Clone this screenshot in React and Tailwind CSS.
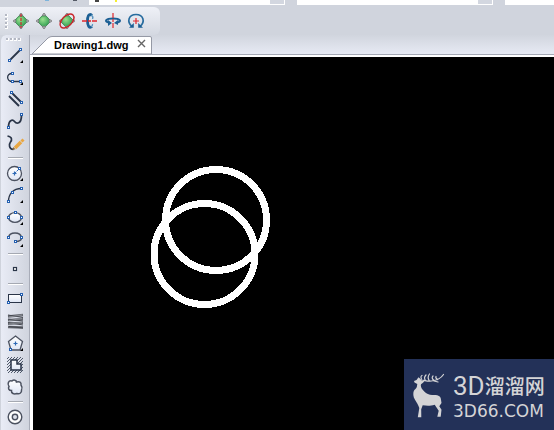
const DARK = '#2a3548'

// Small blue grip square at the end of a stroke
function Node({ x, y }) {
  return <rect x={x - 1.5} y={y - 1.5} width="2" height="2" fill="#fff" stroke="#2560b0" strokeWidth="1" />
}

function Plus({ x, y }) {
  return <path d={`M${x - 2} ${y}h4M${x} ${y - 2}v4`} stroke="#2f6ab5" strokeWidth="1.2" />
}

const groups = [
  [
    { name: 'Line', more: true, art: <><path d="M5 17 17 5" strokeWidth="1.8" /><Node x={6} y={17} /><Node x={17} y={6} /></> },
    { name: 'Polyline', more: true, art: <><path d="M8.500 7.500C2 7 2 15.500 8.500 15.500h8" strokeWidth="1.3" /><Node x={9} y={8} /><Node x={9} y={16} /><Node x={17} y={16} /></> },
    { name: 'Multiline', art: <><path d="M8 5l10 10M5 8l10 10" strokeWidth="1.9" /><Node x={8} y={5} /><Node x={18} y={15} /></> },
    { name: 'Spline', art: <><path d="M4.500 17c0-7 4-8 6-5.500s7 3 7-6.500" strokeWidth="1.8" /><Node x={5} y={18} /><Node x={18} y={5} /></> },
    { name: 'Freehand', art: <><path d="M3.500 4c5 1 4.500 4 3 6s-2 7 3 7.500" strokeWidth="1.700" /><path d="M11 16l6-6" stroke="#e9a743" strokeWidth="3.500" /><path d="M8.500 18l.8-3 2.200 2.200z" fill="#8a6a3c" stroke="none" /><path d="M17.500 9.500l2-2" stroke="#e9a743" strokeWidth="3" /></> },
  ],
  [
    { name: 'Circle', more: true, art: <><circle cx="10.5" cy="11.5" r="7" fill="url(#paper)" stroke="#4c5260" strokeWidth="1.3" /><path d="M10.500 11.500l5-5" stroke="#2f6ab5" strokeDasharray="2 1" /><Plus x={10.5} y={11.5} /><Node x={16} y={7} /></> },
    { name: 'Arc', more: true, art: <><path d="M4.500 17.500C4.500 10 9 4.500 17.500 4.500" strokeWidth="1.300" /><Node x={5} y={18} /><Node x={9} y={9} /><Node x={18} y={5} /></> },
    { name: 'Ellipse', more: true, art: <><ellipse cx="11" cy="11.5" rx="6.5" ry="4.800" fill="url(#paper)" stroke="#4c5260" strokeWidth="1.3" /><Node x={5} y={12} /><Node x={18} y={12} /><Node x={12} y={7} /></> },
    { name: 'Elliptical arc', more: true, art: <><path d="M4.500 9.500c1-6 12-6 13 0 0 3-2 4-6 4" stroke="#4c5260" strokeWidth="1.400" /><Node x={5} y={10} /><Node x={18} y={10} /><Node x={12} y={14} /></> },
  ],
  [{ name: 'Point', art: <rect x="9.5" y="9.5" width="3" height="3" fill="#fff" strokeWidth="1.2" /> }],
  [
    { name: 'Rectangle', art: <><rect x="4.500" y="6.500" width="13" height="8" fill="url(#paper)" /><Node x={5} y={15} /><Node x={18} y={7} /></> },
    {
      name: 'Helix',
      art: (
        <g stroke="#63666e" strokeWidth="2.600">
          <path d="M4 6.500l15-1.500M4 10.200l15-1.200M4 13.800l15-1M4 17l15 .5" />
          <path d="M4 5l15 2.500M4 9l15 2M4 12.500l15 2.500M5 16.500l14 1.500" stroke="#44474f" strokeWidth="1" />
          <path d="M5 7l13-2M5 10.500l13-2M5 14l13-1.500" stroke="#a9acb3" strokeWidth=".6" />
        </g>
      ),
    },
    { name: 'Polygon', more: true, art: <><path d="M11.500 4l7 5.500-2.500 8.500h-9L4.500 9.500z" fill="url(#paper)" stroke="#4c5260" strokeWidth="1.300" /><Plus x={11.5} y={11.5} /><Node x={7} y={18} /></> },
    {
      name: 'Region',
      art: (
        <>
          <path d="M3 5l2-2M3 8l5-5M3 11l8-8M3 14L14 3M3 17L17 3M4 19L19 4M7 19L19 7M10 19l9-9M13 19l6-6M16 19l3-3" strokeWidth=".8" />
          <path d="M7 6h6v4h4v6H7z" fill="url(#paper)" strokeWidth="1.500" />
        </>
      ),
    },
    { name: 'Revision cloud', art: <path d="M5 10.500C3 8 4.500 4 8 5c1.500-1.500 4.500-1 4.500 1 3-1 5 .5 4.500 3 1.500 2 1.500 3 .5 5 .5 3-2.500 4.500-4.500 3.500-3 1-6 0-5.500-3C4.500 14.500 4 12 5 10.500z" fill="url(#paper)" stroke="#4c5260" strokeWidth="1.500" /> },
  ],
  [{ name: 'Donut', art: <g stroke="#4c5260" strokeWidth="1.400"><circle cx="11" cy="11" r="6.800" fill="#fff" /><circle cx="11" cy="11" r="2.700" fill="#dfe3ec" /></g> }],
]

function Sphere() {
  return (
    <>
      <path d="M8 .8L11 4l4 4-4 4-3 3.200L5 12 1 8l4-4z" fill="#dfe3e6" stroke="#6d7476" />
      <circle cx="8" cy="8" r="5" fill="url(#ball)" stroke="#3f9a52" strokeWidth=".8" />
      <g fill="#e8ebee" stroke="#666" strokeWidth=".9">
        <circle cx="8" cy="1.5" r="1" />
        <circle cx="8" cy="14.5" r="1" />
        <circle cx="1.500" cy="8" r="1" />
        <circle cx="14.500" cy="8" r="1" />
      </g>
    </>
  )
}

const orbitTools = [
  { name: 'Constrained orbit', art: <><Sphere /><path d="M8 1v14" stroke="#d3242b" strokeWidth="1.200" strokeDasharray="3 1" /></> },
  { name: 'Free orbit', art: <Sphere /> },
  { name: 'Continuous orbit', art: <><Sphere /><ellipse cx="8" cy="8" rx="8.500" ry="5" transform="rotate(-45 8 8)" stroke="#c9252b" strokeWidth="1.400" /></> },
  { name: 'Orbit X', art: <><path d="M10 2.500C6.500-.5 5.500 4 5.500 8s1.500 8 4.500 5.500" stroke="#1c5f94" strokeWidth="2.800" /><path d="M9 2c2 1 2 3 1.500 4M9 14c1.500-1 1.800-2 1.500-3" stroke="#5793be" strokeWidth="1.300" /><path d="M0 8h15" stroke="#e0262c" strokeWidth="1.300" strokeDasharray="5 1 3 1" /></> },
  { name: 'Orbit Y', art: <><path d="M4 9.500C-1 8.500.5 5.500 8 5.500s9 3 4 4" stroke="#1c5f94" strokeWidth="2.200" /><path d="M3 7l4 3-4 3zM13 7l-4 3 4 2z" fill="#1c5f94" stroke="none" /><path d="M8 0v15" stroke="#e0262c" strokeWidth="1.200" strokeDasharray="5 1 3 1" /></> },
  { name: 'Orbit Z', art: <><path d="M4 13.500C-1.500 9 .5 1.500 8 1.500s9.500 7.500 4 12" stroke="#286c9f" strokeWidth="1.700" /><path d="M1 14.800h4.800V10zM15 14.800h-4.800V10z" fill="#1c5f94" stroke="none" /><path d="M5 8h6M8 5v6" stroke="#e0262c" strokeWidth="1.200" /></> },
]

// One dot of a toolbar's drag handle
function GripDot() {
  return <span className="size-[3px] shrink-0 border-r border-b border-white bg-[#b4b8c3]" />
}

function TopCombo({ label, className }) {
  return (
    <div className={`flex h-[5px] items-start bg-white ${className}`}>
      <select aria-label={label} className="h-[5px] min-w-0 flex-1 appearance-none bg-white" />
      <span className="mr-px h-1 w-3.5 shrink-0 bg-[#d3d7e0]" />
    </div>
  )
}

function OrbitToolbar() {
  return (
    <div role="toolbar" aria-label="Orbit" className="mt-0.5 flex h-7 w-[160px] items-center rounded-r-md bg-linear-to-b from-[#eff1f7] to-[#d4d8e1] pl-1">
      <div className="flex w-[5px] flex-col items-center gap-px">
        {[0, 1, 2, 3].map(i => <GripDot key={i} />)}
      </div>
      {orbitTools.map(t => (
        <button key={t.name} aria-label={t.name} className="flex h-6 w-[23px] items-center justify-center">
          <svg className="overflow-visible" width="16" height="16" viewBox="0 0 16 16" fill="none">{t.art}</svg>
        </button>
      ))}
    </div>
  )
}

function DrawToolbar() {
  return (
    <aside className="w-[30px] shrink-0 rounded-tl-md border-x border-l-[#cfd3dc] border-r-[#a8acb8] bg-linear-to-r from-[#e9ecf6] to-[#d0d4de]">
      <div className="flex h-[9px] items-center gap-px pl-[5px]">
        {[0, 1, 2, 3].map(i => <GripDot key={i} />)}
      </div>
      {groups.map((tools, i) => (
        <div key={i}>
          {i > 0 && (
            <div className="flex h-2 items-center pl-[7px]">
              <div className="h-0.5 w-[15px] border-t border-[#a5a9b2] bg-white" />
            </div>
          )}
          {tools.map(t => (
            <button key={t.name} aria-label={t.name} className="block h-[22px] pl-[3px]">
              <svg width="22" height="22" viewBox="0 0 22 22" fill="none" stroke={DARK}>
                {t.art}
                {t.more && <path d="M19 16v3h-3z" fill="#000" stroke="none" />}
              </svg>
            </button>
          ))}
        </div>
      ))}
    </aside>
  )
}

function TabBar() {
  return (
    <div className="flex h-5 items-end border-b border-[#a5a9b5] bg-linear-to-b from-[#d1d5de] to-[#e7eaf4]">
      <div className="relative flex h-[18px] w-[122px] items-center pr-1">
        <svg className="absolute inset-0 size-full" viewBox="0 0 122 18" preserveAspectRatio="none">
          <path d="M2 18L18 2q2-1.500 4-1.500h98q1.500 0 1.500 1.500v16z" fill="#fff" stroke="#9599a5" />
        </svg>
        <a href="#drawing1" className="relative ml-6 font-['Liberation_Sans',sans-serif] text-[11px] leading-4 font-bold text-black">Drawing1.dwg</a>
        <button aria-label="Close Drawing1.dwg" className="relative ml-auto flex size-3.5 items-center justify-center pb-1">
          <svg width="9" height="9" viewBox="0 0 9 9"><path d="M1 1l7 7M8 1L1 8" stroke="#666" strokeWidth="1.400" /></svg>
        </button>
      </div>
    </div>
  )
}

function Deer() {
  return (
    <svg width="34" height="46" viewBox="0 0 34 46" fill="#d4d4d6">
      <path d="M1 8L3.500 7l2-2.800L7.500 6l1.500 2 3-.5-2 2.300-2 1.500c-.5 2 .2 3.800 1.700 5.400 2 2.500 4.300 4.500 7.300 5 3 .3 5 .1 7.300.6 2.500.6 3.500 2.200 3.700 4.400l.5 3.300-2.200 3.300 2.200 3.400-.8 7h-3.400l1.400-6-4-6c-4.500 1.500-8 1.200-12 .6l-1.500 4L8.300 44.300H4.800l1.500-9.300C5.500 32 3.500 29.500 2 26.700 0 24 0 20 .8 18c1-1.800 2.500-2.500 3-4l.5-3L1.500 9.500z" />
      <g fill="none" stroke="#d4d4d6" strokeWidth="1.200" strokeLinecap="round">
        <path d="M8.500 7c4 .5 6 1.500 10 1 6-.8 10-3.500 12-6.500M12.500 7.500C11 5.500 11.500 3.500 13 2M16.500 8c-2-2.500-1.500-5 0-7M21 7.500c-2.500-2-2-3.500-1-4.500M24.500 6.500C23 5.500 22.500 4.500 23 3.500M8.500 6C7.500 4.500 8 3 9 2.500M21 8l4 1" />
      </g>
    </svg>
  )
}

function Watermark() {
  return (
    <div className="absolute right-0 bottom-0 flex h-[71px] w-[150px] items-start bg-[#233158] pt-3 pl-[9px] text-[#d4d4d6]">
      <div className="pt-0.5"><Deer /></div>
      <div className="ml-1.5 whitespace-nowrap">
        <div className="flex h-[30px] items-center leading-7">
          <span className="font-['Roboto',sans-serif] text-[26px]">3D</span>
          <span className="font-['Noto_Sans_CJK_SC',sans-serif] text-[20px] font-medium">溜溜网</span>
        </div>
        <div className="font-['DejaVu_Sans',sans-serif] text-[17px] leading-5">3D66.COM</div>
      </div>
    </div>
  )
}

export default function App() {
  return (
    <div className="flex min-h-screen flex-col bg-[#d0d4dd]">
      <header>
        <div className="flex h-[5px]">
          <div className="flex w-[89px] shrink-0 items-start">
            <span className="ml-[45px] h-px w-1 bg-[#7db4dc]" />
            <span className="ml-6 h-px w-1 bg-[#555a66]" />
          </div>
          <div className="flex h-[5px] w-7 items-start justify-end gap-4 bg-white">
            <span className="h-0.5 w-1 shrink-0 bg-[#444]" />
            <span className="h-0.5 w-0.5 shrink-0 bg-[#f5ee30]" />
          </div>
          <TopCombo label="Layer" className="w-[168px]" />
          <TopCombo label="Linetype" className="ml-3 w-[196px]" />
          <div className="ml-3 h-[5px] flex-1 bg-white">
            <select aria-label="Lineweight" className="block h-[5px] w-full appearance-none bg-white" />
          </div>
        </div>
        <OrbitToolbar />
      </header>

      <div className="flex flex-1">
        <DrawToolbar />
        <main className="flex min-w-0 flex-1 flex-col">
          <TabBar />
          <div className="relative flex-1 border-t-2 border-l-3 border-white bg-black">
            <svg className="block" width="240" height="260" fill="none" stroke="#fff" strokeWidth="7" shapeRendering="crispEdges">
              <circle cx="183" cy="163" r="50.500" />
              <circle cx="171.500" cy="197" r="50.500" />
            </svg>
            <Watermark />
          </div>
        </main>
      </div>

      <svg className="absolute size-0" aria-hidden="true">
        <defs>
          <radialGradient id="ball" cx="38%" cy="35%" r="70%">
            <stop offset="0" stopColor="#9be08f" />
            <stop offset="1" stopColor="#35a355" />
          </radialGradient>
          <linearGradient id="paper" x1="0" y1="0" x2="0" y2="1">
            <stop offset="0" stopColor="#fff" />
            <stop offset="1" stopColor="#dfe6f5" />
          </linearGradient>
        </defs>
      </svg>
    </div>
  )
}
